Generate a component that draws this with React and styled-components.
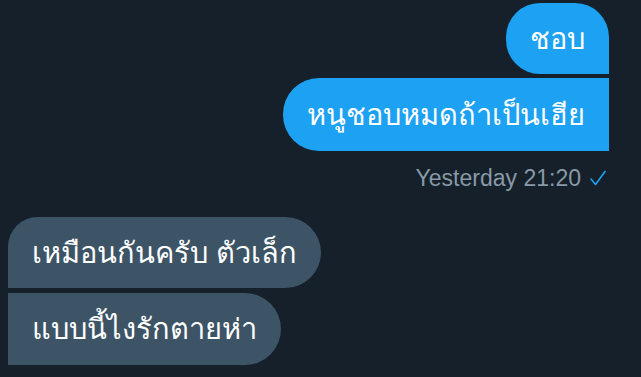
import React from "react";
import styled, { createGlobalStyle } from "styled-components";

const GlobalStyle = createGlobalStyle`
  html, body {
    margin: 0;
    padding: 0;
    background: #15202b;
  }
  body {
    font-family: "Noto Sans", "DejaVu Sans", sans-serif;
  }
`;

const Page = styled.div`
  width: 641px;
  height: 377px;
  overflow: hidden;
  background: #15202b;
  display: flex;
  flex-direction: column;
  padding-top: 3px;
  box-sizing: border-box;
`;

const Group = styled.div`
  display: flex;
  flex-direction: column;
  gap: ${(p) => p.$gap || 5}px;
  align-items: ${(p) => (p.$mine ? "flex-end" : "flex-start")};
  padding: ${(p) => (p.$mine ? "0 32px 0 0" : "0 0 0 8px")};
  margin-top: ${(p) => p.$top || 0}px;
`;

const Bubble = styled.div`
  height: ${(p) => p.$h || 71}px;
  display: flex;
  align-items: center;
  padding: 0 24px 0 24px;
  box-sizing: border-box;
  background: ${(p) => (p.$mine ? "#1da1f2" : "#3d5466")};
  color: #ffffff;
  font-size: 29px;
  white-space: nowrap;
  border-radius: ${(p) => p.$radius};
`;

const Meta = styled.div`
  display: flex;
  align-items: center;
  gap: 9px;
  margin-top: 9px;
  padding-right: 3px;
  font-family: "Liberation Sans", Arial, sans-serif;
  font-size: 23px;
  line-height: 28px;
  color: #8899a6;
`;

const Check = () => (
  <svg width="16" height="16" viewBox="0 0 16 16">
    <path
      d="M1 9 L5.5 14.5 L15 1.5"
      fill="none"
      stroke="#1da1f2"
      strokeWidth="1.6"
      strokeLinecap="round"
      strokeLinejoin="round"
    />
  </svg>
);

export default function App() {
  return (
    <>
      <GlobalStyle />
      <Page>
        <Group $mine $gap={4}>
          <Bubble $mine $radius="34px 34px 0 34px">ชอบ</Bubble>
          <Bubble $mine $h={73} $radius="36px 0 0 36px">
            หนูชอบหมดถ้าเป็นเฮีย
          </Bubble>
          <Meta>
            Yesterday 21:20 <Check />
          </Meta>
        </Group>
        <Group $top={25} $gap={5}>
          <Bubble $radius="30px 36px 36px 0">เหมือนกันครับ ตัวเล็ก</Bubble>
          <Bubble $h={72} $radius="0 36px 36px 0">
            แบบนี้ไงรักตายห่า
          </Bubble>
        </Group>
      </Page>
    </>
  );
}
